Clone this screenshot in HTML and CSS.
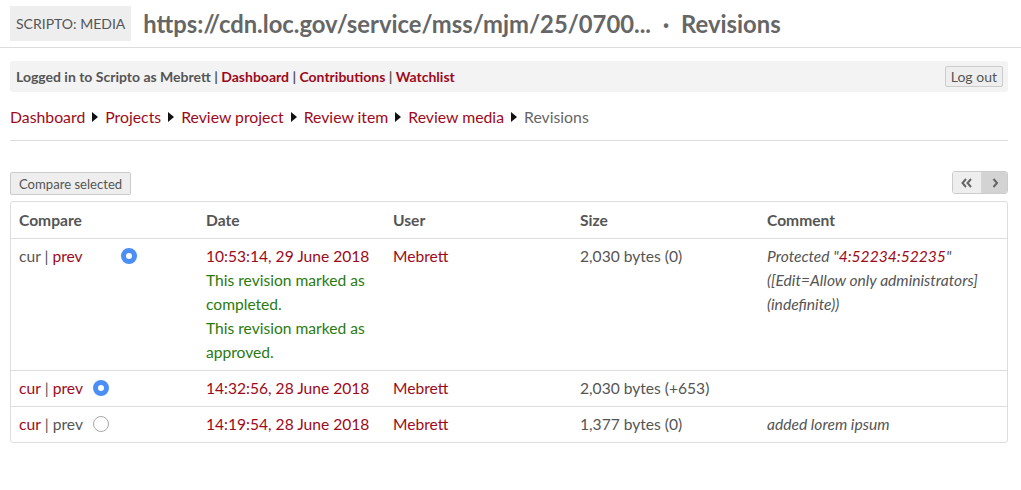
FILE: index.html
```html
<!DOCTYPE html>
<html>
<head>
<meta charset="utf-8">
<link rel="stylesheet" href="styles.css">
</head>
<body>
<header class="site-header">
  <div class="site-title">Scripto: Media</div>
  <h1 class="page-title">https://cdn.loc.gov/service/mss/mjm/25/0700... <span class="dot">·</span> Revisions</h1>
</header>
<div class="user-bar">
  <div class="user-links">Logged in to Scripto as Mebrett | <a href="#">Dashboard</a> | <a href="#">Contributions</a> | <a href="#">Watchlist</a></div>
  <button class="btn small">Log out</button>
</div>
<nav class="breadcrumbs">
  <a href="#">Dashboard</a><span class="sep"></span><a href="#">Projects</a><span class="sep"></span><a href="#">Review project</a><span class="sep"></span><a href="#">Review item</a><span class="sep"></span><a href="#">Review media</a><span class="sep"></span><span class="current">Revisions</span>
</nav>
<hr class="rule">
<div class="toolbar">
  <button class="btn">Compare selected</button>
  <div class="pager">
    <span class="pg first"><svg width="12" height="10" viewBox="0 0 12 10"><path d="M5 1 L1.5 5 L5 9 M10 1 L6.5 5 L10 9" fill="none" stroke="#666" stroke-width="2"/></svg></span>
    <span class="pg next"><svg width="8" height="10" viewBox="0 0 8 10"><path d="M2.5 1 L6 5 L2.5 9" fill="none" stroke="#666" stroke-width="2"/></svg></span>
  </div>
</div>
<div class="table-wrap">
<table class="revisions">
  <thead>
    <tr><th class="c1">Compare</th><th class="c2">Date</th><th class="c3">User</th><th class="c4">Size</th><th>Comment</th></tr>
  </thead>
  <tbody>
    <tr>
      <td><div class="cmp">cur | <a href="#">prev</a><span class="radio on first"></span></div></td>
      <td><a href="#">10:53:14, 29 June 2018</a><div class="status">This revision marked as completed.</div><div class="status">This revision marked as approved.</div></td>
      <td><a href="#">Mebrett</a></td>
      <td>2,030 bytes (0)</td>
      <td class="comment">Protected "<a href="#">4:52234:52235</a>" ([Edit=Allow only administrators] (indefinite))</td>
    </tr>
    <tr>
      <td><div class="cmp"><a href="#">cur</a>&nbsp;| <a href="#">prev</a><span class="radio on"></span></div></td>
      <td><a href="#">14:32:56, 28 June 2018</a></td>
      <td><a href="#">Mebrett</a></td>
      <td>2,030 bytes (+653)</td>
      <td class="comment"></td>
    </tr>
    <tr>
      <td><div class="cmp"><a href="#">cur</a>&nbsp;| prev<span class="radio"></span></div></td>
      <td><a href="#">14:19:54, 28 June 2018</a></td>
      <td><a href="#">Mebrett</a></td>
      <td>1,377 bytes (0)</td>
      <td class="comment">added lorem ipsum</td>
    </tr>
  </tbody>
</table>
</div>
</body>
</html>
```
FILE: styles.css
```css
* { box-sizing: border-box; }
html, body { margin: 0; padding: 0; background: #fff; }
body { font-family: Lato, "Open Sans", sans-serif; color: #555; font-size: 15.6px; }
a { color: #9d0a20; text-decoration: none; }

.site-header {
  display: flex; align-items: center; gap: 12px;
  padding: 6px 10px 6px; border-bottom: 1px solid #ddd; height: 48px;
}
.site-title {
  background: #eee; color: #555; text-transform: uppercase;
  font-size: 14px; padding: 0 6px; height: 35px; line-height: 35px;
}
.page-title { margin: 0; font-size: 23.8px; font-weight: 700; color: #666; letter-spacing: 0; }
.page-title .dot { font-weight: 700; margin: 0 6px; }

.user-bar {
  margin: 13px 13px 0 10px; background: #f3f3f3; border-radius: 3px;
  height: 31px; display: flex; align-items: center; justify-content: space-between;
  padding: 0 5px 0 6px;
}
.user-links { font-size: 14px; font-weight: 700; color: #555; }
.btn {
  font-family: Lato, sans-serif; font-size: 13.1px; color: #555;
  background: #eee; border: 1px solid #ccc; border-radius: 2px;
  height: 23px; padding: 0 8px; cursor: pointer;
}
.btn.small { height: 21px; padding: 0 5px; font-size: 14px; }

.breadcrumbs { margin: 14px 10px 0; font-size: 15.8px; line-height: 22px; display: flex; align-items: center; }
.breadcrumbs .sep {
  display: inline-block; width: 0; height: 0; margin: 0 7px 0 7px;
  border-top: 5px solid transparent; border-bottom: 5px solid transparent; border-left: 6px solid #111;
}
.breadcrumbs .current { color: #666; }
.rule { margin: 12px 13px 0 10px; border: 0; border-top: 1px solid #ddd; }

.toolbar { margin: 31px 13px 0 10px; display: flex; justify-content: space-between; align-items: flex-start; }
.pager { display: flex; border: 1px solid #ccc; border-radius: 3px; overflow: hidden; height: 23px; margin-top: -1px; }
.pg { width: 28px; display: flex; align-items: center; justify-content: center; }
.pg.first { background: #eee; border-right: 1px solid #d6d6d6; width: 29px; }
.pg.next { background: #d3d3d3; width: 25px; }

.table-wrap { margin: 6px 13px 0 10px; border: 1px solid #ddd; border-radius: 3px; }
.revisions { width: 100%; border-collapse: collapse; }
.revisions th { text-align: left; font-weight: 700; color: #555; font-size: 15.6px; height: 36px; padding: 0 8px; border-bottom: 1px solid #ddd; }
.revisions td { vertical-align: top; padding: 5px 8px 6px; line-height: 24px; border-top: 1px solid #ddd; }
.revisions tbody tr:first-child td { border-top: 0; }
.c1, .c2, .c3, .c4 { width: 187px; }
.status { color: #2a7a0e; }
.comment { font-style: italic; }
.cmp { display: flex; align-items: center; height: 24px; white-space: pre; }
.radio {
  display: inline-block; width: 16px; height: 16px; border-radius: 50%; flex: none;
  border: 1px solid #aaa; background: #fff; margin-left: 10px;
}
.radio.on { border: 5px solid #4a8ef6; background: #fff; }
.radio.first { margin-left: 38px; }
```
